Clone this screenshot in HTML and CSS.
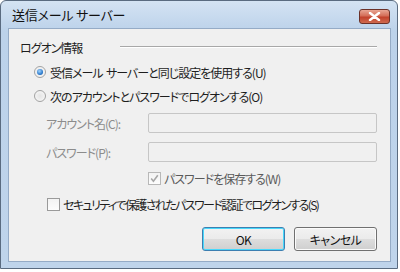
FILE: index.html
```html
<!DOCTYPE html>
<html lang="ja">
  <head>
    <meta charset="UTF-8" />
    <title>送信メール サーバー</title>
    <link rel="stylesheet" href="styles.css">
  </head>
  <body>
    <div class="window">
      <!-- title bar -->
      <div class="titlebar">
        <span class="title">送信メール サーバー</span>
        <button class="close-btn" aria-label="閉じる">
          <svg width="13" height="9" viewBox="0 0 13 9">
            <path d="M2 1 L11 8 M11 1 L2 8" stroke="#fff" stroke-width="2.4" stroke-linecap="round" />
          </svg>
        </button>
      </div>

      <div class="client">
        <div class="group-title">
          <span class="group-label">ログオン情報</span>
          <span class="rule"></span>
        </div>

        <label class="radio-row">
          <span class="radio checked"></span>
          <span>受信メール&nbsp; サーバーと同じ設定を使用する(U)</span>
        </label>
        <label class="radio-row">
          <span class="radio"></span>
          <span>次のアカウントとパスワードでログオンする(O)</span>
        </label>

        <div class="field-row first">
          <span class="field-label">アカウント名(C):</span>
          <span class="input"></span>
        </div>
        <div class="field-row">
          <span class="field-label">パスワード(P):</span>
          <span class="input"></span>
        </div>

        <label class="check-row save">
          <span class="check checked">
            <svg width="9" height="9" viewBox="0 0 9 9">
              <path d="M1.2 4.6 L3.4 7.2 L7.8 1.2" fill="none" stroke="#a7a7a7" stroke-width="1.6" />
            </svg>
          </span>
          <span class="save-text">パスワードを保存する(W)</span>
        </label>

        <label class="check-row secure">
          <span class="check"></span>
          <span class="tight">セキュリティで保護されたパスワード認証でログオンする(S)</span>
        </label>

        <div class="buttons">
          <button class="btn default">OK</button>
          <button class="btn">キャンセル</button>
        </div>
      </div>
    </div>
  </body>
</html>
```

FILE: styles.css
```css
* {
  margin: 0;
  padding: 0;
  box-sizing: border-box;
}

body {
  background: #fff;
  font-family: "Noto Sans CJK JP", "Noto Sans", sans-serif;
  font-size: 12px;
  font-feature-settings: "palt";
  letter-spacing: -1px;
  color: #1e1e1e;
  width: 400px;
  height: 272px;
  overflow: hidden;
}

/* window frame, the Aero light blue one */
.window {
  width: 398px;
  height: 269px;
  border: 1px solid #5a6b80;
  border-radius: 6px 6px 0 0;
  background: linear-gradient(#d4e3f3, #bcd2ea 30px, #bfd4eb);
  padding: 0 6px 6px 7px;
  display: flex;
  flex-direction: column;
}

.titlebar {
  height: 27px;
  display: flex;
  align-items: center;
  justify-content: space-between;
  padding: 0 1px 0 4px;
}

.title {
  font-size: 13px;
  letter-spacing: -0.2px;
  color: #111;
}

.close-btn {
  width: 31px;
  height: 15px;
  margin-top: 4px;
  border: 1px solid #6b3128;
  border-radius: 3px;
  background: linear-gradient(#e8a593, #d46e58 45%, #c2422c 55%, #cf6a4f);
  display: flex;
  align-items: center;
  justify-content: center;
}

.client {
  flex: 1;
  background: #f0f0f0;
  border: 1px solid #95abc6;
  padding: 9px 13px 0 11px;
}

.group-title {
  display: flex;
  align-items: center;
  height: 18px;
}

.group-label {
  width: 100px;
}

.rule {
  flex: 1;
  height: 2px;
  border-top: 1px solid #a8a8a8;
  border-bottom: 1px solid #fff;
}

.radio-row {
  display: flex;
  align-items: center;
  gap: 4px;
  height: 24px;
  padding-left: 14px;
}

.radio-row:first-of-type {
  margin-top: 4px;
}

.radio {
  width: 12px;
  height: 12px;
  border-radius: 50%;
  border: 1px solid #a2a2a2;
  background: radial-gradient(circle, #e4e4e4, #fafafa);
  position: relative;
}

.radio.checked::after {
  content: "";
  position: absolute;
  left: 2px;
  top: 2px;
  width: 6px;
  height: 6px;
  border-radius: 50%;
  background: radial-gradient(circle at 40% 35%, #9fd3ff, #1f6fc4 70%, #124f9a);
}

.field-row {
  display: flex;
  align-items: center;
  height: 20px;
  margin-top: 9px;
  padding-left: 26px;
  color: #8c8c8c;
}

.field-row.first {
  margin-top: 5px;
}

.field-label {
  width: 102px;
}

.input {
  flex: 1;
  height: 20px;
  border: 1px solid #c6c6c6;
  border-radius: 2px;
  background: #f0f0f0;
}

.check-row {
  display: flex;
  align-items: center;
  gap: 3px;
  height: 20px;
  margin-top: 6px;
}

.check-row.save {
  padding-left: 128px;
}

.check-row.secure {
  padding-left: 27px;
}

.tight {
  letter-spacing: -1.6px;
}

.check {
  width: 13px;
  height: 13px;
  border: 1px solid #9a9a9a;
  background: linear-gradient(#f3f3f3, #fdfdfd);
  display: flex;
  align-items: center;
  justify-content: center;
}

.check.checked {
  border-color: #b8b8b8;
}

.save-text {
  color: #5a5a5a;
}

.buttons {
  display: flex;
  justify-content: flex-end;
  gap: 9px;
  margin-top: 13px;
}

.btn {
  width: 83px;
  height: 24px;
  font-family: inherit;
  font-size: 12px;
  font-feature-settings: "palt";
  letter-spacing: -0.5px;
  color: #111;
  border: 1px solid #707070;
  border-radius: 3px;
  background: linear-gradient(#f2f2f2, #ebebeb 50%, #dddddd 51%, #cfcfcf);
  box-shadow: inset 0 0 0 1px #fbfbfb;
}

.btn.default {
  border-color: #3c7fb1;
  box-shadow: inset 0 0 0 1px #48d8fb;
}
```
